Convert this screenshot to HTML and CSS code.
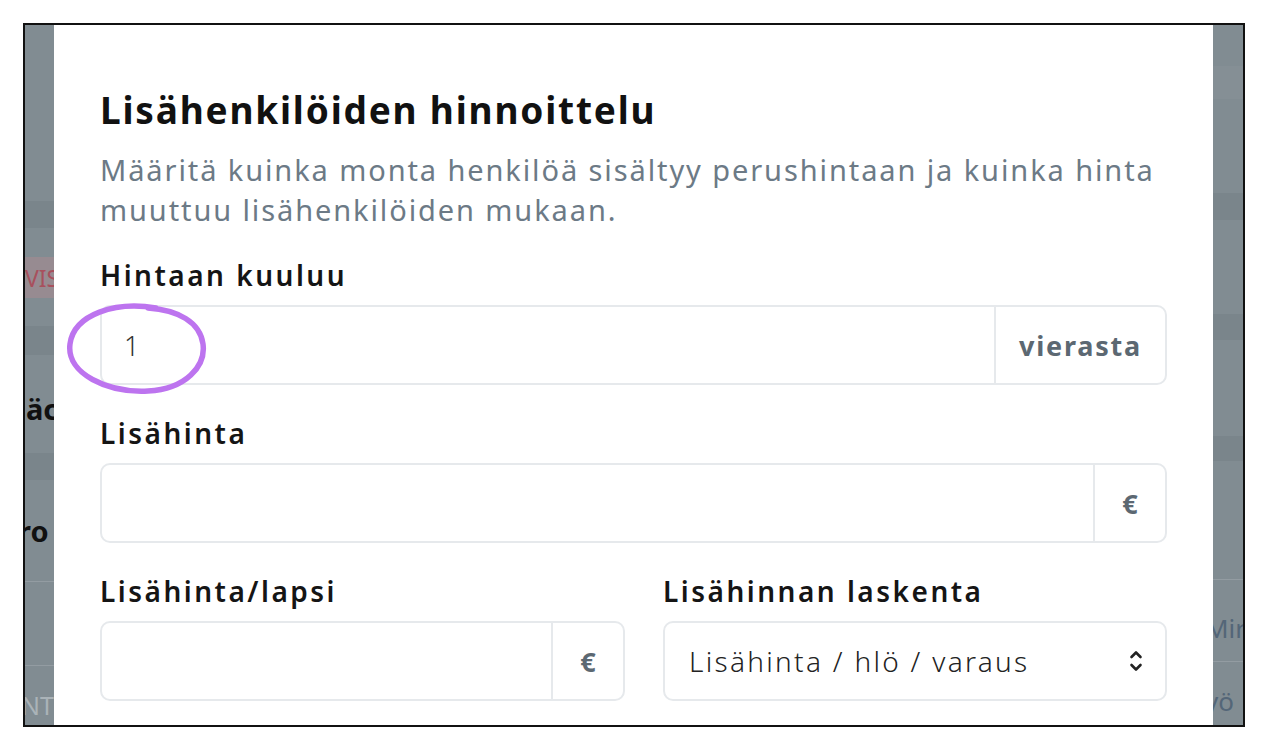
FILE: index.html
```html
<!DOCTYPE html>
<html lang="fi">
<head>
<meta charset="utf-8">
<title>Lisähenkilöiden hinnoittelu</title>
<link rel="stylesheet" href="styles.css">
</head>
<body>
<div class="frame">
  <div class="side side-left">
    <div class="band base h176"></div>
    <div class="band dark h27"></div>
    <div class="band base h29"></div>
    <div class="band pink h41"><span class="t-vis">VIS</span></div>
    <div class="band base h28"></div>
    <div class="band dark h29"></div>
    <div class="band base h98"><span class="t-bold">äc</span></div>
    <div class="band dark h27"></div>
    <div class="band base h102 line"><span class="t-bold t-ro">ro</span></div>
    <div class="band base h84 line"></div>
    <div class="band base grow"><span class="t-light">NT</span></div>
  </div>

  <div class="modal">
    <h2 class="title">Lisähenkilöiden hinnoittelu</h2>
    <p class="subtitle">Määritä kuinka monta henkilöä sisältyy perushintaan ja kuinka hinta muuttuu lisähenkilöiden mukaan.</p>

    <div class="group">
      <label class="label">Hintaan kuuluu</label>
      <div class="input-group">
        <input class="field" type="text" value="1">
        <span class="addon addon-wide">vierasta</span>
        <svg class="scribble" width="150" height="100" viewBox="0 0 150 100">
          <path d="M90 8 C 50 1, 8 14, 4 44 C 0 74, 42 93, 82 91 C 120 89, 140 66, 137 44 C 134 22, 112 10, 82 8" fill="none" stroke="#bd74ef" stroke-width="5.5" stroke-linecap="round"/>
        </svg>
      </div>
    </div>

    <div class="group">
      <label class="label">Lisähinta</label>
      <div class="input-group">
        <input class="field" type="text" value="">
        <span class="addon addon-euro">€</span>
      </div>
    </div>

    <div class="row">
      <div class="group">
        <label class="label">Lisähinta/lapsi</label>
        <div class="input-group">
          <input class="field" type="text" value="">
          <span class="addon addon-euro">€</span>
        </div>
      </div>
      <div class="group">
        <label class="label">Lisähinnan laskenta</label>
        <div class="select">
          <span class="select-text">Lisähinta / hlö / varaus</span>
          <svg class="chevrons" width="14" height="26" viewBox="0 0 14 26">
            <path d="M2.5 9 L7 4.5 L11.5 9" fill="none" stroke="#222" stroke-width="2.6" stroke-linecap="round" stroke-linejoin="round"/>
            <path d="M2.5 17 L7 21.5 L11.5 17" fill="none" stroke="#222" stroke-width="2.6" stroke-linecap="round" stroke-linejoin="round"/>
          </svg>
        </div>
      </div>
    </div>
  </div>

  <div class="side side-right">
    <div class="band base h41"></div>
    <div class="band light h33"></div>
    <div class="band base h94"></div>
    <div class="band dark h27"></div>
    <div class="band base h94"></div>
    <div class="band dark h26"></div>
    <div class="band base h96"></div>
    <div class="band dark h25"></div>
    <div class="band base h119 line"></div>
    <div class="band base h82 line"><span class="t-right">Mir</span></div>
    <div class="band base grow"><span class="t-right">yö</span></div>
  </div>
</div>
</body>
</html>
```

FILE: styles.css
```css
* { box-sizing: border-box; }

html, body {
  margin: 0;
  padding: 0;
  background: #ffffff;
}

body {
  font-family: "Noto Sans", "Open Sans", sans-serif;
  padding: 23px 0 0 23px;
}

.frame {
  width: 1222px;
  height: 704px;
  border: 2px solid #111;
  display: flex;
  overflow: hidden;
  background: #818c92;
}

/* backdrop strips */
.side {
  display: flex;
  flex-direction: column;
  overflow: hidden;
}
.side-left { width: 29px; }
.side-right { width: 30px; }

.band {
  flex: none;
  display: flex;
  align-items: center;
  overflow: hidden;
  white-space: nowrap;
}
.band.grow { flex: 1; }
.base { background: #818c92; }
.dark { background: #7a858b; }
.light { background: #858f95; }
.pink { background: #978b91; }
.line { border-bottom: 1px solid #939ca2; }

.h25 { height: 25px; }
.h26 { height: 26px; }
.h27 { height: 27px; }
.h28 { height: 28px; }
.h29 { height: 29px; }
.h33 { height: 33px; }
.h41 { height: 41px; }
.h82 { height: 82px; }
.h84 { height: 84px; }
.h94 { height: 94px; }
.h96 { height: 96px; }
.h98 { height: 98px; }
.h102 { height: 102px; }
.h119 { height: 119px; }
.h176 { height: 176px; }

.t-vis {
  color: #a8505d;
  font-size: 23px;
  margin-left: 0;
}
.t-bold {
  color: #111;
  font-weight: 700;
  font-size: 29px;
  margin-left: 1px;
  margin-top: 8px;
}
.t-ro { margin-left: -7px; margin-top: 0; }
.t-light {
  color: #aab3b8;
  font-size: 25px;
  margin-left: -4px;
  margin-top: 18px;
}
.t-right {
  color: #546678;
  font-size: 26px;
  margin-left: -8px;
  margin-top: 14px;
}

/* modal */
.modal {
  flex: none;
  width: 1159px;
  background: #ffffff;
  padding: 61px 46px 0 46px;
}

.title {
  margin: 0;
  font-size: 37px;
  line-height: 48px;
  font-weight: 700;
  letter-spacing: 1.8px;
  color: #111;
}

.subtitle {
  margin: 16px 0 0 0;
  font-size: 29px;
  line-height: 40px;
  letter-spacing: 1.9px;
  color: #6c7a86;
}

.group {
  margin-top: 28px;
  display: flex;
  flex-direction: column;
}
.subtitle + .group { margin-top: 25px; }

.label {
  font-size: 28px;
  line-height: 40px;
  font-weight: 600;
  letter-spacing: 2.5px;
  color: #151515;
  margin-bottom: 10px;
}

.input-group {
  position: relative;
  display: flex;
  height: 80px;
  border: 2px solid #e6e9ec;
  border-radius: 10px;
}

.field {
  flex: 1;
  min-width: 0;
  border: none;
  outline: none;
  background: transparent;
  padding: 0 22px;
  font-family: inherit;
  font-size: 27px;
  font-weight: 300;
  color: #333;
  border-radius: 10px;
}

.addon {
  display: flex;
  align-items: center;
  justify-content: center;
  border-left: 2px solid #e6e9ec;
  font-size: 27px;
  font-weight: 700;
  letter-spacing: 1.8px;
  color: #5c6872;
}
.addon-wide { width: 171px; }
.addon-euro { width: 72px; letter-spacing: 0; }

.scribble {
  position: absolute;
  left: -36px;
  top: -7px;
}

.row {
  display: grid;
  grid-template-columns: 525px 1fr;
  column-gap: 38px;
}

.select {
  display: flex;
  align-items: center;
  justify-content: space-between;
  height: 80px;
  border: 2px solid #e6e9ec;
  border-radius: 10px;
  padding: 0 22px 0 24px;
}

.select-text {
  font-size: 28px;
  font-weight: 300;
  letter-spacing: 2.3px;
  color: #222;
}
```
